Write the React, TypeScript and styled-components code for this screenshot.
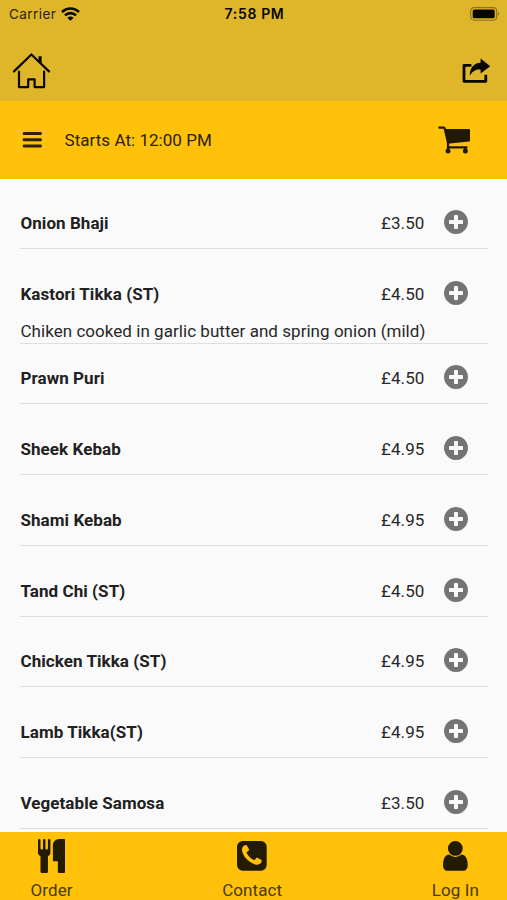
import React from "react";
import styled, { createGlobalStyle } from "styled-components";

const GlobalStyle = createGlobalStyle`
  * { box-sizing: border-box; }
  body { margin: 0; background: #fafafa; overflow: hidden; }
`;

const Screen = styled.div`
  width: 507px;
  height: 900px;
  display: flex;
  flex-direction: column;
  overflow: hidden;
  background: #fafafa;
  color: #282828;
  font-family: Roboto, "Liberation Sans", sans-serif;
  font-size: 17px;
  line-height: 20px;
`;

const Header = styled.header`
  flex: 0 0 101px;
  background: #dfb629;
  color: #080600;
`;

const StatusBar = styled.div`
  height: 27px;
  padding: 0 7px 0 9px;
  display: grid;
  grid-template-columns: 1fr auto 1fr;
  align-items: center;
  font-family: Inter, "Liberation Sans", sans-serif;
  font-size: 13.5px;
`;

const Carrier = styled.div`
  display: flex;
  align-items: center;
  gap: 5px;
  color: #2b2308;
  letter-spacing: 0.45px;
`;

const Clock = styled.div`
  font-size: 14px;
  font-weight: 600;
  letter-spacing: 0.65px;
`;

const Battery = styled.div`
  display: flex;
  justify-content: flex-end;
`;

const NavBar = styled.div`
  height: 74px;
  padding: 25px 16px 0 12px;
  display: flex;
  justify-content: space-between;
  align-items: flex-start;
`;

const ShareSlot = styled.div`
  padding-top: 6px;
`;

const Toolbar = styled.div`
  flex: 0 0 78px;
  padding: 0 36px 0 22px;
  display: flex;
  align-items: center;
  background: #ffc10a;
  color: #2b2105;
`;

const StartTime = styled.span`
  flex: 1;
  padding-left: 22.5px;
  font-size: 17px;
  letter-spacing: 0.04px;
`;

const Icon = styled.svg`
  display: block;
  flex: none;
  fill: currentColor;
`;

const Menu = styled.ul`
  flex: 1;
  min-height: 0;
  overflow: hidden;
  margin: 0;
  padding: 0 19.5px 0 20px;
  list-style: none;
`;

const MenuItem = styled.li<{ $height: number }>`
  height: ${(p) => p.$height}px;
  display: flex;
  flex-direction: column;
  justify-content: flex-end;
  border-bottom: 1px solid #dedede;
`;

const ItemLine = styled.div<{ $gap: number }>`
  height: 24px;
  margin-bottom: ${(p) => p.$gap}px;
  display: grid;
  grid-template-columns: 1fr auto 24px;
  column-gap: 19px;
  align-items: center;
  padding: 0 20px 0 0.5px;
`;

const Name = styled.span`
  padding-top: 2px;
  font-size: 17px;
  font-weight: 700;
  letter-spacing: 0.06px;
  color: #212121;
`;

const Price = styled.span`
  padding-top: 2px;
  letter-spacing: 0.1px;
`;

const AddButton = styled.button`
  width: 24px;
  height: 24px;
  padding: 0;
  border: 0;
  background: none;
  color: #747474;
`;

const Description = styled.div`
  padding-left: 0.5px;
  height: 22px;
  letter-spacing: 0.04px;
`;

const TabBar = styled.nav`
  flex: 0 0 68px;
  padding: 0 28px 0 30.5px;
  display: flex;
  justify-content: space-between;
  background: #ffc10a;
  color: #231b00;
`;

const Tab = styled.a`
  display: flex;
  flex-direction: column;
  align-items: center;
`;

const TabIcon = styled.div`
  height: 48px;
  display: flex;
  align-items: center;
`;

const TabLabel = styled.span`
  color: #4a3907;
  letter-spacing: 0.1px;
`;

const PlusCircle = () => (
  <Icon width="24" height="24" viewBox="0 128 1536 1536">
    <path d="M1216 960v-128q0-26-19-45t-45-19h-256v-256q0-26-19-45t-45-19h-128q-26 0-45 19t-19 45v256h-256q-26 0-45 19t-19 45v128q0 26 19 45t45 19h256v256q0 26 19 45t45 19h128q26 0 45-19t19-45v-256h256q26 0 45-19t19-45zm320-64q0 209-103 385.5t-279.5 279.5-385.5 103-385.5-103-279.5-279.5-103-385.5 103-385.5 279.5-279.5 385.5-103 385.5 103 279.5 279.5 103 385.5z" />
  </Icon>
);

const Cutlery = () => (
  <Icon width="27.3" height="34.7" viewBox="192 0 1408 1792">
    <path d="M832 64v640q0 61-35.5 111t-92.5 70v779q0 52-38 90t-90 38h-128q-52 0-90-38t-38-90v-779q-57-20-92.5-70t-35.5-111v-640q0-26 19-45t45-19 45 19 19 45v416q0 26 19 45t45 19 45-19 19-45v-416q0-26 19-45t45-19 45 19 19 45v416q0 26 19 45t45 19 45-19 19-45v-416q0-26 19-45t45-19 45 19 19 45zm768 0v1600q0 52-38 90t-90 38h-128q-52 0-90-38t-38-90v-512h-224q-13 0-22.5-9.5t-9.5-22.5v-800q0-132 94-226t226-94h256q26 0 45 19t19 45z" />
  </Icon>
);

const PhoneSquare = () => (
  <Icon width="29.7" height="29.7" viewBox="0 128 1536 1536">
    <path d="M1280 1142q0-11-2-16-3-8-38.5-29.5t-88.5-49.5l-53-29q-5-3-19-13t-25-15-21-5q-18 0-47 32.5t-57 65.5-44 33q-7 0-16.5-3.5t-15.5-6.5-17-9.5-14-8.5q-99-55-170.5-126.5t-126.5-170.5q-2-3-8.5-14t-9.5-17-6.5-15.5-3.5-16.5q0-13 20.5-33.5t45-38.5 45-39.5 20.5-36.5q0-10-5-21t-15-25-13-19q-3-6-15-28.5t-25-45.5-26.5-47.5-25-40.5-16.5-18-16-2q-48 0-101 22-46 21-80 94.5t-34 130.5q0 16 2.5 34t5 30.5 9 33 10 29.5 12.5 33 11 30q60 164 216.5 320.5t320.5 216.5q6 2 30 11t33 12.5 29.5 10 33 9 30.5 5 34 2.5q57 0 130.5-34t94.5-80q22-53 22-101zm256-726v960q0 119-84.5 203.5t-203.5 84.5h-960q-119 0-203.5-84.5t-84.5-203.5v-960q0-119 84.5-203.5t203.5-84.5h960q119 0 203.5 84.5t84.5 203.5z" />
  </Icon>
);

const User = () => (
  <Icon width="24.7" height="29.7" viewBox="256 128 1280 1536">
    <path d="M1536 1399q0 109-62.5 187t-150.5 78h-854q-88 0-150.5-78t-62.5-187q0-85 8.5-160.5t31.5-152 58.5-131 94-89 134.5-34.5q131 128 313 128t313-128q76 0 134.5 34.5t94 89 58.5 131 31.5 152 8.5 160.5zm-256-887q0 159-112.5 271.5t-271.5 112.5-271.5-112.5-112.5-271.5 112.5-271.5 271.5-112.5 271.5 112.5 112.5 271.5z" />
  </Icon>
);

const Wifi = () => (
  <Icon width="19" height="14" viewBox="0 0 19 14" color="#080600">
    <g fill="none" stroke="currentColor" strokeWidth="2.6">
      <path d="M1 5a12.2 12.2 0 0 1 17 0" />
      <path d="M4 8.4a7.9 7.9 0 0 1 11 0" />
    </g>
    <path d="M9.5 13.8 6.4 10.9a4.5 4.5 0 0 1 6.2 0z" />
  </Icon>
);

const BatteryFull = () => (
  <Icon width="30" height="14" viewBox="0 0 30 14">
    <rect x="0.7" y="0.6" width="26" height="12.6" rx="3.4" fill="none" stroke="#8c7219" strokeWidth="1.1" />
    <rect x="2.7" y="2.5" width="22" height="8.8" rx="1.6" />
    <path d="M27.9 4.8q2.4 2.1 0 4.2z" fill="#8c7219" />
  </Icon>
);

const Home = () => (
  <Icon width="39" height="38" viewBox="0 0 39 38">
    <g fill="none" stroke="currentColor" strokeWidth="2.2" strokeLinecap="round" strokeLinejoin="round">
      <path d="M2 19.4 19.4 2.5 37 19.4" />
      <path d="M7 19.5v15.6h9.2v-7.8h6.4v7.8h9.5V19.5" />
    </g>
    <path d="M26.6 4.2h3v7.7l-3-2.8z" />
  </Icon>
);

const Share = () => (
  <Icon width="29" height="26" viewBox="0 0 29 26">
    <path d="M9.4 7.4H2v15.9h21.8v-6.6" fill="none" stroke="currentColor" strokeWidth="2.8" strokeLinejoin="round" />
    <path d="M18.6 0.6 28.2 8.2l-9.6 7.3v-4.1c-4.8-.2-7.9 1.3-10.8 6.3C7.8 10 11.6 4.9 18.6 4.7z" />
  </Icon>
);

const Bars = () => (
  <Icon width="20" height="18" viewBox="0 0 20 18">
    <rect x="0.8" y="1.1" width="19" height="2.9" rx="1" />
    <rect x="0.8" y="7.3" width="19" height="2.9" rx="1" />
    <rect x="0.8" y="13.5" width="19" height="2.9" rx="1" />
  </Icon>
);

const Cart = () => (
  <Icon width="33" height="28" viewBox="0 0 33 28" color="#211a00">
    <path d="M1.3 1.6h4.4q.8 0 1 .9L10 16.8v4.6h18.6" fill="none" stroke="currentColor" strokeWidth="2.2" strokeLinecap="round" />
    <path d="M6.8 3.1h24.4q.8 0 .8.8v10.7q0 .8-.8.9L9.6 17.8z" />
    <circle cx="10" cy="25" r="2.5" />
    <circle cx="27.4" cy="25" r="2.5" />
    <path d="M9 20h2.2v4H9zM26.3 21h2.2v3h-2.2z" />
  </Icon>
);

const items = [
  { name: "Onion Bhaji", price: "£3.50", height: 70 },
  {
    name: "Kastori Tikka (ST)",
    price: "£4.50",
    height: 95,
    description: "Chiken cooked in garlic butter and spring onion (mild)",
  },
  { name: "Prawn Puri", price: "£4.50", height: 60 },
  { name: "Sheek Kebab", price: "£4.95", height: 70.85 },
  { name: "Shami Kebab", price: "£4.95", height: 70.85 },
  { name: "Tand Chi (ST)", price: "£4.50", height: 70.85 },
  { name: "Chicken Tikka (ST)", price: "£4.95", height: 70.85 },
  { name: "Lamb Tikka(ST)", price: "£4.95", height: 70.85 },
  { name: "Vegetable Samosa", price: "£3.50", height: 70.85 },
];

const tabs = [
  { label: "Order", icon: <Cutlery /> },
  { label: "Contact", icon: <PhoneSquare /> },
  { label: "Log In", icon: <User /> },
];

export default function App() {
  return (
    <>
      <GlobalStyle />
      <Screen>
        <Header>
          <StatusBar>
            <Carrier>
              Carrier
              <Wifi />
            </Carrier>
            <Clock>7:58 PM</Clock>
            <Battery>
              <BatteryFull />
            </Battery>
          </StatusBar>
          <NavBar>
            <Home />
            <ShareSlot>
              <Share />
            </ShareSlot>
          </NavBar>
        </Header>
        <Toolbar>
          <Bars />
          <StartTime>Starts At: 12:00 PM</StartTime>
          <Cart />
        </Toolbar>
        <Menu>
          {items.map((item) => (
            <MenuItem key={item.name} $height={item.height}>
              <ItemLine $gap={item.description ? 16 : 14}>
                <Name>{item.name}</Name>
                <Price>{item.price}</Price>
                <AddButton aria-label={`Add ${item.name}`}>
                  <PlusCircle />
                </AddButton>
              </ItemLine>
              {item.description && <Description>{item.description}</Description>}
            </MenuItem>
          ))}
        </Menu>
        <TabBar>
          {tabs.map((tab) => (
            <Tab key={tab.label}>
              <TabIcon>{tab.icon}</TabIcon>
              <TabLabel>{tab.label}</TabLabel>
            </Tab>
          ))}
        </TabBar>
      </Screen>
    </>
  );
}
